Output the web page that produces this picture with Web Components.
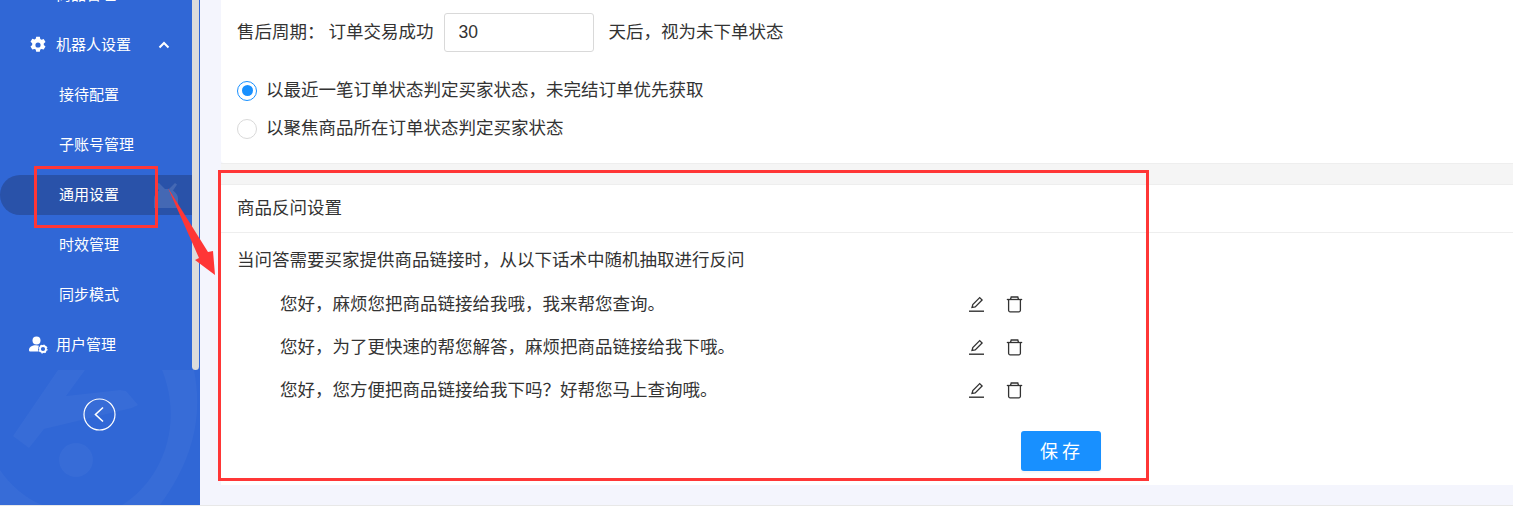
<!DOCTYPE html>
<html lang="zh">
<head>
<meta charset="utf-8">
<title>通用设置</title>
<style>
  html, body { margin: 0; height: 100%; overflow: hidden; background: #fff; }
  body { font-family: "Liberation Sans", "Noto Sans CJK SC", sans-serif; color: #333; }
</style>
</head>
<body>
<template id="gear-tpl">
  <svg width="18" height="18" viewBox="0 0 18 18"><path fill="#fff" fill-rule="evenodd" d="M7.200.8h3.600l.5 2.200 1.200.7 2.200-.7 1.800 3.100-1.700 1.500v1.400l1.700 1.500-1.800 3.100-2.200-.7-1.200.7-.5 2.200H7.200l-.5-2.200-1.200-.7-2.200.7-1.800-3.100 1.700-1.500V7.300L1.500 5.800l1.800-3.100 2.200.7 1.200-.7zM9 6.400a2.600 2.600 0 1 0 0 5.200 2.600 2.600 0 0 0 0-5.200z"/></svg>
</template>

<app-shell>
  <side-nav slot="nav">
    <nav-item icon="box">商品管理</nav-item>
    <nav-item icon="gear" chevron>机器人设置</nav-item>
    <nav-item sub>接待配置</nav-item>
    <nav-item sub>子账号管理</nav-item>
    <nav-item sub active>通用设置</nav-item>
    <nav-item sub>时效管理</nav-item>
    <nav-item sub>同步模式</nav-item>
    <nav-item icon="user">用户管理</nav-item>
  </side-nav>

  <settings-card flat>
    <period-row></period-row>
    <radio-option checked>以最近一笔订单状态判定买家状态，未完结订单优先获取</radio-option>
    <radio-option>以聚焦商品所在订单状态判定买家状态</radio-option>
  </settings-card>

  <settings-card title="商品反问设置">
    <div style="line-height:26px">当问答需要买家提供商品链接时，从以下话术中随机抽取进行反问</div>
    <phrase-list>
      <phrase-row>您好，麻烦您把商品链接给我哦，我来帮您查询。</phrase-row>
      <phrase-row>您好，为了更快速的帮您解答，麻烦把商品链接给我下哦。</phrase-row>
      <phrase-row>您好，您方便把商品链接给我下吗？好帮您马上查询哦。</phrase-row>
    </phrase-list>
    <save-bar>保存</save-bar>
  </settings-card>
</app-shell>
<red-marks></red-marks>

<script>
class AppShell extends HTMLElement {
  constructor() {
    super();
    this.attachShadow({mode: 'open'});
    this.shadowRoot.innerHTML = `
      <style>
        :host { display: flex; height: 505px; background: #f4f5fd; border-bottom: 1px solid #e8e8e8; overflow: hidden; }
        .nav { flex: 0 0 200px; display: block; }
        main { flex: 1; min-width: 0; padding: 0 0 20px 21px; display: flex; flex-direction: column; }
        ::slotted(settings-card:last-child) { flex: 1; }
      </style>
      <div class="nav"><slot name="nav"></slot></div>
      <main><slot></slot></main>
    `;
  }
}

class SideNav extends HTMLElement {
  constructor() {
    super();
    this.attachShadow({mode: 'open'});
    this.shadowRoot.innerHTML = `
      <style>
        :host { display: block; position: relative; height: 505px; background: #3067d6; overflow: hidden; }
        .mark { position: absolute; left: 0; top: 370px; }
        .menu { position: relative; display: flex; height: 370px; overflow: hidden; }
        .list { width: 192px; margin-top: -30px; }
        .thumb { width: 7px; height: 370px; background: #dcdcdc; border-radius: 0 0 4px 4px; }
        .back { position: relative; display: flex; justify-content: center; padding-top: 28px; width: 199px; }
      </style>
      <svg class="mark" width="200" height="135" viewBox="0 0 200 135">
        <g fill="#fff" fill-opacity=".035">
          <path d="M58 0h27L66 26l54-6 6 1 12 14-6 3-88 21-15 19-16-12z"/>
          <circle cx="76" cy="90" r="17"/>
          <path d="M162 0h32c8 40 3 85-34 135h-38c40-25 62-80 40-135z"/>
          <path d="M0 100c10 15 25 28 42 35H0z"/>
        </g>
      </svg>
      <div class="menu">
        <div class="list"><slot></slot></div>
        <div class="thumb"></div>
      </div>
      <div class="back">
        <svg width="33" height="33" viewBox="0 0 33 33" fill="none" stroke="#fff">
          <circle cx="16.500" cy="16.500" r="15.500" stroke-width="1.200"/>
          <path d="M20 9.500l-7.500 7 7.500 7" stroke-width="1.600"/>
        </svg>
      </div>
    `;
  }
}

class NavItem extends HTMLElement {
  constructor() {
    super();
    this.attachShadow({mode: 'open'});
  }

  connectedCallback() {
    const icon = this.getAttribute('icon');
    const icons = {
      gear: document.getElementById('gear-tpl').innerHTML,
      box: `<svg width="18" height="18" viewBox="0 0 18 18"><path fill="#fff" d="M2 3l7-3 7 3v5l-7 3-7-3z"/></svg>`,
      user: `<svg width="19" height="18" viewBox="0 0 19 18"><circle cx="7.500" cy="4.500" r="4" fill="#fff"/><path fill="#fff" d="M0 14c0-3 3-4.800 7-4.800 1.200 0 2.300.2 3 .5-1 1.400-1.300 3.600-.3 5.800H1.500C.6 15.500 0 15 0 14z"/><circle cx="14" cy="13" r="3" fill="none" stroke="#fff" stroke-width="1.800"/><circle cx="14" cy="13" r="4" fill="none" stroke="#fff" stroke-width="1.100" stroke-dasharray="1.500 1.640"/></svg>`
    };
    this.shadowRoot.innerHTML = `
      <style>
        :host { display: flex; align-items: center; height: 50px; position: relative; color: #fff;
          font: 15px "Liberation Sans", "Noto Sans CJK SC", sans-serif; }
        :host([sub]) { padding-left: 59px; }
        :host([icon]) { padding-left: 29px; }
        :host([active])::before { content: ""; position: absolute; left: 0; right: 0; top: 5px; bottom: 5px;
          background: #2952a9; border-radius: 20px 0 0 20px; }
        .ic { width: 27px; display: flex; align-items: center; }
        .text { position: relative; padding-bottom: 4px; }
        .chev { margin-left: 27px; }
        .bot { position: absolute; left: 153px; top: 13px; }
      </style>
      ${icon ? `<span class="ic">${icons[icon]}</span>` : ''}
      <span class="text"><slot></slot></span>
      ${this.hasAttribute('chevron') ? `<svg class="chev" width="12" height="8" viewBox="0 0 12 8" fill="none" stroke="#fff" stroke-width="2"><path d="M1.500 6.500L6 2l4.500 4.500"/></svg>` : ''}
      ${this.hasAttribute('active') ? `<svg class="bot" width="28" height="26" viewBox="0 0 28 26" fill="#fff" fill-opacity=".13"><path d="M6 0l6 6h4l6-6 2 1.500-4 6c3 2 5 5 5 8V25H1v-9.500c0-3 2-6 5-8l-4-6z"/></svg>` : ''}
    `;
  }
}

class SettingsCard extends HTMLElement {
  constructor() {
    super();
    this.attachShadow({mode: 'open'});
  }

  connectedCallback() {
    const title = this.getAttribute('title');
    this.shadowRoot.innerHTML = `
      <style>
        :host { display: block; background: #fff; color: #333; font: 17.500px "Liberation Sans", "Noto Sans CJK SC", sans-serif; }
        :host([flat]) { height: 163px; padding: 13px 16px 0; box-sizing: border-box; border-radius: 0 0 0 3px; }
        .strip { height: 20px; background: #f5f5f5; border-top: 1px solid #eee; border-bottom: 1px solid #eee; }
        h2 { margin: 0; padding: 0 16px; height: 47px; line-height: 47px; font-size: 17.500px; font-weight: 400; border-bottom: 1px solid #eee; }
        .body { padding: 14px 16px 0; }
      </style>
      ${title ? `<div class="strip"></div><h2>${title}</h2><div class="body"><slot></slot></div>` : `<slot></slot>`}
    `;
    this.removeAttribute('title');
  }
}

class PeriodRow extends HTMLElement {
  constructor() {
    super();
    this.attachShadow({mode: 'open'});
    this.shadowRoot.innerHTML = `
      <style>
        :host { display: flex; align-items: center; height: 39px; margin-bottom: 19px; }
        span { padding-bottom: 4px; }
        .label { margin-right: 4px; }
        input { box-sizing: border-box; width: 150px; height: 39px; margin: 0 15px 0 10px; padding: 0 14px;
          border: 1px solid #d9d9d9; border-radius: 3px; outline: 0; color: #333; background: #fff;
          font: 17.500px "Liberation Sans", sans-serif; }
      </style>
      <span class="label">售后周期：</span>
      <span>订单交易成功</span>
      <input value="30">
      <span>天后，视为未下单状态</span>
    `;
  }
}

class RadioOption extends HTMLElement {
  constructor() {
    super();
    this.attachShadow({mode: 'open'});
    this.shadowRoot.innerHTML = `
      <style>
        :host { display: flex; align-items: center; height: 38px; gap: 9px; }
        span { padding-bottom: 4px; }
        i { box-sizing: border-box; width: 20px; height: 20px; border: 1px solid #d9d9d9; border-radius: 50%;
          display: flex; align-items: center; justify-content: center; margin-top: 1px; background: #fff; }
        :host([checked]) i { border-color: #1890ff; }
        :host([checked]) i::after { content: ""; width: 11px; height: 11px; border-radius: 50%; background: #1890ff; }
      </style>
      <i></i><span><slot></slot></span>
    `;
  }
}

class PhraseList extends HTMLElement {
  constructor() {
    super();
    this.attachShadow({mode: 'open'});
    this.shadowRoot.innerHTML = `
      <style>:host { display: block; margin-top: 10px; }</style>
      <slot></slot>
    `;
  }
}

class PhraseRow extends HTMLElement {
  constructor() {
    super();
    this.attachShadow({mode: 'open'});
    this.shadowRoot.innerHTML = `
      <style>
        :host { display: grid; grid-template-columns: 688px 38px 18px; align-items: center; height: 43px; padding-left: 43px; }
        span { padding-bottom: 4px; }
        svg { display: block; margin-bottom: 1px; }
      </style>
      <span><slot></slot></span>
      <svg width="17" height="17" viewBox="0 0 17 17" fill="none" stroke="#333" stroke-width="1.300">
        <path d="M4 11.500l.8-3L11.700 1.600l2.400 2.400-6.900 6.900z"/>
        <path d="M1 15.200h15" stroke-width="1.400"/>
      </svg>
      <svg width="17" height="17" viewBox="0 0 17 17" fill="none" stroke="#333" stroke-width="1.300">
        <path d="M.8 3.500h15.400"/>
        <path d="M4.500 3.500l.7-2.500h6.600l.7 2.500"/>
        <path d="M2.600 3.500v10.800a1.500 1.500 0 0 0 1.500 1.500h8.800a1.500 1.500 0 0 0 1.500-1.500V3.500"/>
      </svg>
    `;
  }
}

class SaveBar extends HTMLElement {
  constructor() {
    super();
    this.attachShadow({mode: 'open'});
    this.shadowRoot.innerHTML = `
      <style>
        :host { display: flex; justify-content: flex-end; width: 864px; margin-top: 19px; }
        button { width: 80px; height: 40px; padding: 0 0 3px 2px; border: 0; border-radius: 3px; background: #1890ff; color: #fff;
          font: 18px "Liberation Sans", "Noto Sans CJK SC", sans-serif; letter-spacing: 4px;
          box-shadow: 0 2px 2px rgba(0, 0, 0, .04); }
      </style>
      <button><slot></slot></button>
    `;
  }
}

// the red annotation drawn over the screenshot
class RedMarks extends HTMLElement {
  constructor() {
    super();
    this.attachShadow({mode: 'open'});
    this.shadowRoot.innerHTML = `
      <style>
        :host { position: absolute; left: 0; top: 0; width: 1513px; height: 512px; pointer-events: none; }
        div { position: absolute; box-sizing: border-box; border: 3px solid #ff3636; }
        .small { left: 34px; top: 166px; width: 124px; height: 62px; }
        .big { left: 218px; top: 170px; width: 931px; height: 311px; }
        svg { position: absolute; left: 0; top: 0; }
      </style>
      <div class="small"></div>
      <div class="big"></div>
      <svg width="240" height="300"><path fill="#ff3636" d="M168 188L208 252 213 251 215 275 195 260 199 258z"/></svg>
    `;
  }
}

customElements.define('app-shell', AppShell);
customElements.define('side-nav', SideNav);
customElements.define('nav-item', NavItem);
customElements.define('settings-card', SettingsCard);
customElements.define('period-row', PeriodRow);
customElements.define('radio-option', RadioOption);
customElements.define('phrase-list', PhraseList);
customElements.define('phrase-row', PhraseRow);
customElements.define('save-bar', SaveBar);
customElements.define('red-marks', RedMarks);
</script>
</body>
</html>
